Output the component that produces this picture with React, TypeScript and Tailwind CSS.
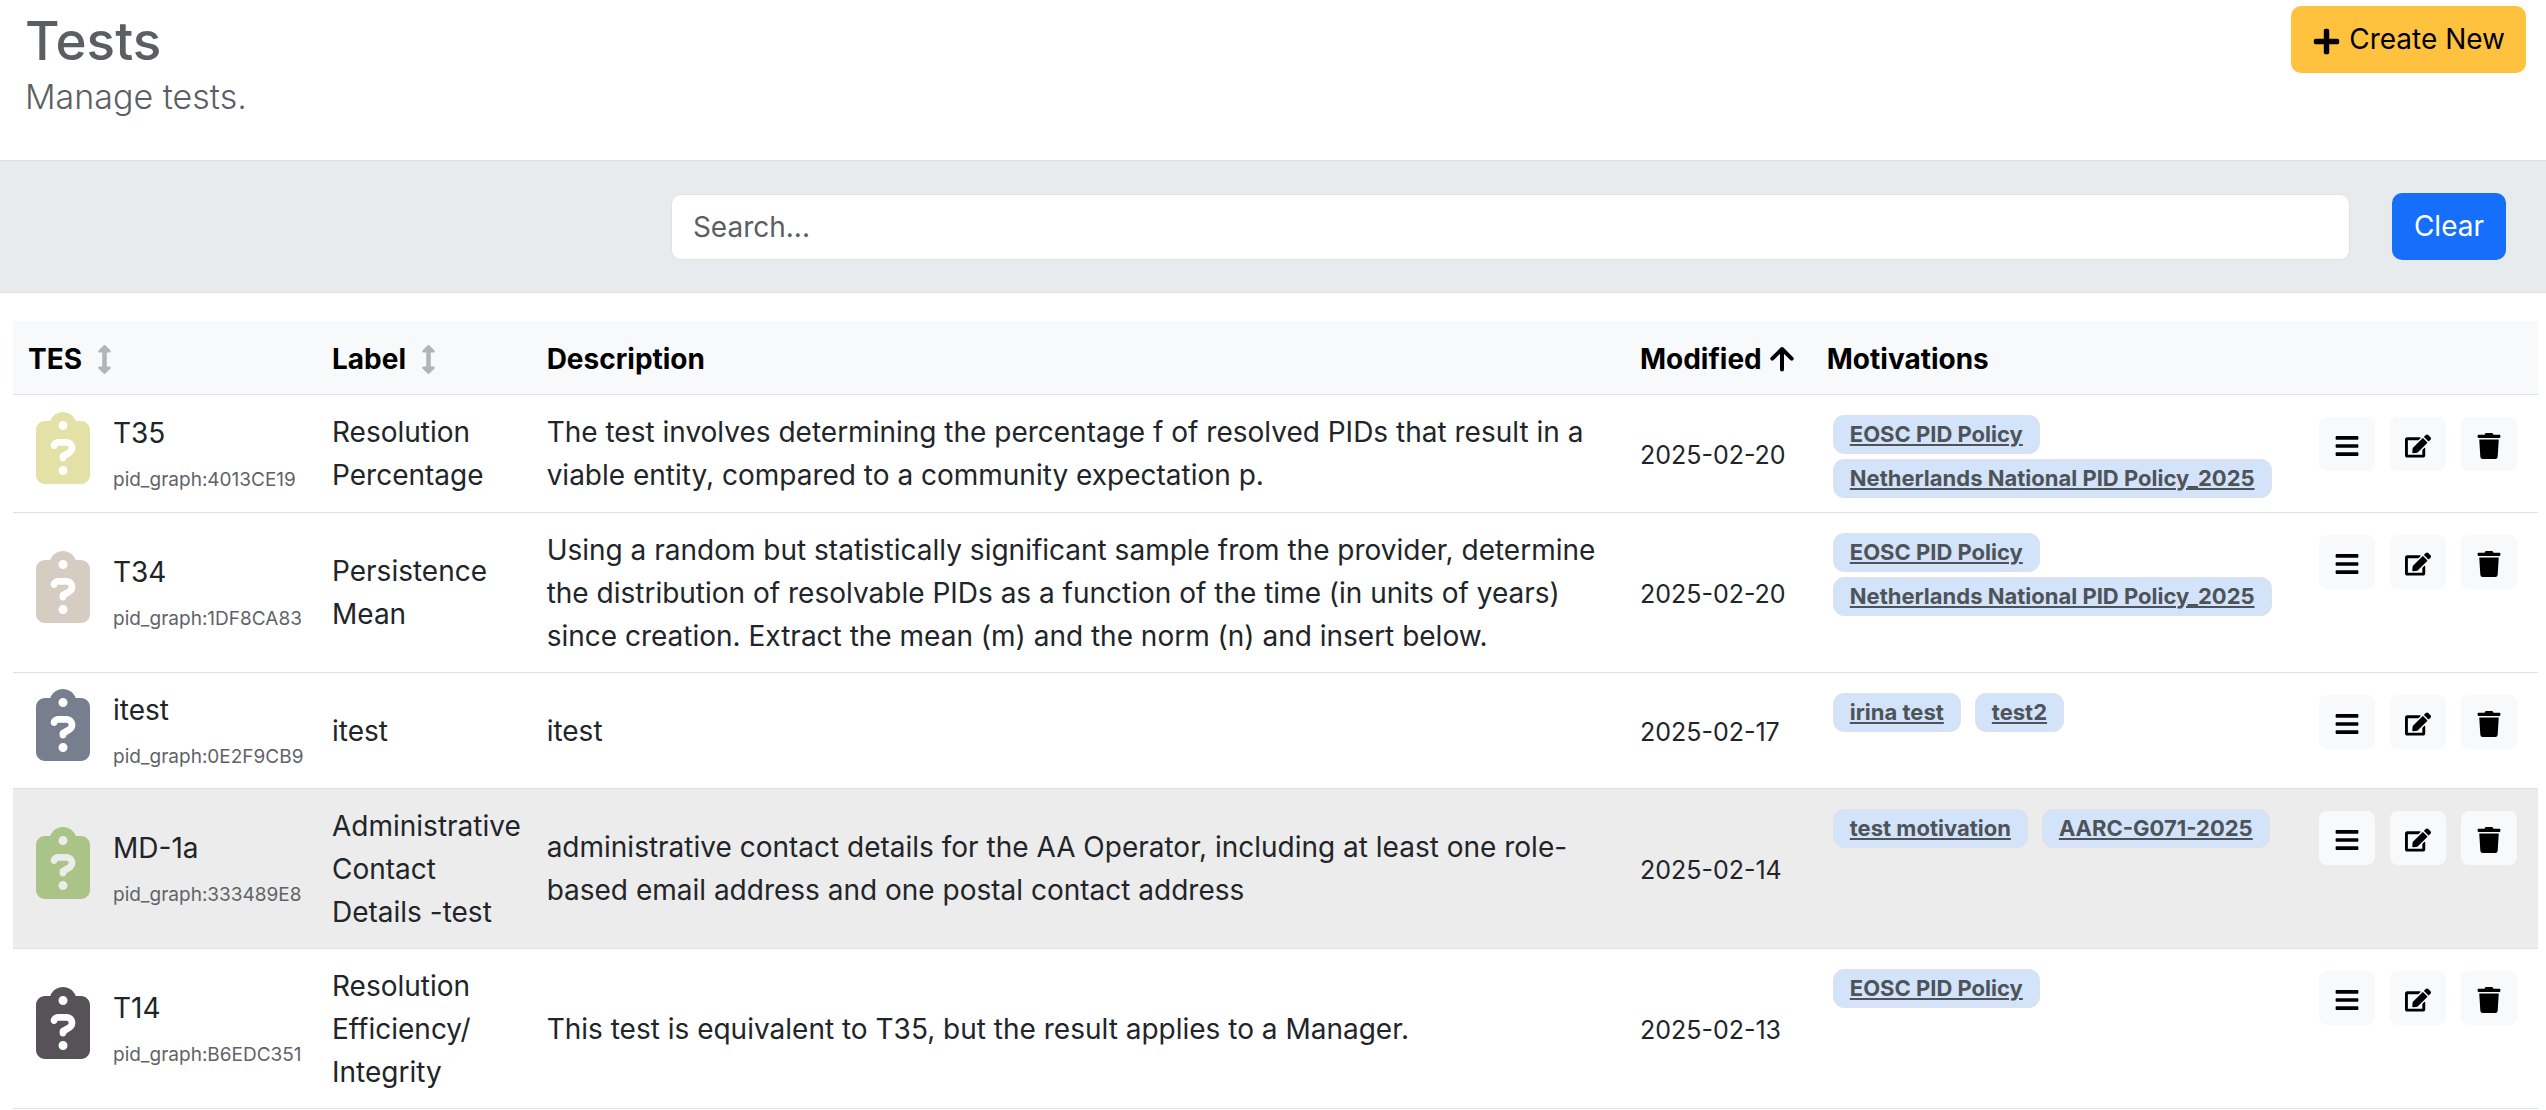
import { FaPlus, FaBars, FaEdit, FaTrash, FaArrowsAltV } from "react-icons/fa";
import { FaClipboardQuestion } from "react-icons/fa6";

type Test = {
  name: string;
  pid: string;
  label: string;
  description: string;
  modified: string;
  motivations: string[];
  color: string;
  active?: boolean;
};

const tests: Test[] = [
  {
    name: "T35",
    pid: "pid_graph:4013CE19",
    label: "Resolution Percentage",
    description:
      "The test involves determining the percentage f of resolved PIDs that result in a viable entity, compared to a community expectation p.",
    modified: "2025-02-20",
    motivations: ["EOSC PID Policy", "Netherlands National PID Policy_2025"],
    color: "text-[#e3e1a5]",
  },
  {
    name: "T34",
    pid: "pid_graph:1DF8CA83",
    label: "Persistence Mean",
    description:
      "Using a random but statistically significant sample from the provider, determine the distribution of resolvable PIDs as a function of the time (in units of years) since creation. Extract the mean (m) and the norm (n) and insert below.",
    modified: "2025-02-20",
    motivations: ["EOSC PID Policy", "Netherlands National PID Policy_2025"],
    color: "text-[#d6cdc2]",
  },
  {
    name: "itest",
    pid: "pid_graph:0E2F9CB9",
    label: "itest",
    description: "itest",
    modified: "2025-02-17",
    motivations: ["irina test", "test2"],
    color: "text-[#777f8f]",
  },
  {
    name: "MD-1a",
    pid: "pid_graph:333489E8",
    label: "Administrative Contact Details -test",
    description:
      "administrative contact details for the AA Operator, including at least one role-based email address and one postal contact address",
    modified: "2025-02-14",
    motivations: ["test motivation", "AARC-G071-2025"],
    color: "text-[#aac487]",
    active: true,
  },
  {
    name: "T14",
    pid: "pid_graph:B6EDC351",
    label: "Resolution Efficiency/ Integrity",
    description: "This test is equivalent to T35, but the result applies to a Manager.",
    modified: "2025-02-13",
    motivations: ["EOSC PID Policy"],
    color: "text-[#575158]",
  },
];

const actions = [
  { name: "Details", Icon: FaBars },
  { name: "Edit", Icon: FaEdit },
  { name: "Delete", Icon: FaTrash },
];

function SortedUpIcon() {
  return (
    <svg
      viewBox="0 0 24 26"
      className="h-[26px] w-6"
      fill="none"
      stroke="currentColor"
      strokeWidth="4"
      strokeLinecap="round"
      strokeLinejoin="round"
      aria-hidden="true"
    >
      <path d="M2.3 12.6 12 3l9.7 9.6M12 4v19.5" />
    </svg>
  );
}

function TestRow({ test }: { test: Test }) {
  return (
    <tr className={`border-b border-[#dee2e6] ${test.active ? "bg-[#ececec]" : ""}`}>
      <td className="pt-4 pr-3.5 pb-3.5 pl-[15px] align-middle">
        <div className="flex">
          <FaClipboardQuestion className={`ml-2 h-[72px] w-[54px] shrink-0 ${test.color}`} />
          <div className="ml-[23px]">
            <div>{test.name}</div>
            <div className="mt-2 text-[19px] leading-[34px] text-[#5f6367]">{test.pid}</div>
          </div>
        </div>
      </td>
      <td className="pt-4 pr-3 pb-3.5 pl-4 align-middle">{test.label}</td>
      <td className="pt-4 pr-3 pb-3.5 pl-4 align-middle">{test.description}</td>
      <td className="pt-[18px] pr-3 pb-3.5 pl-4 align-middle text-[25px]">{test.modified}</td>
      <td className="pt-5 pr-0 pb-3.5 pl-[22px] align-top">
        <div className="flex flex-wrap gap-x-3.5 gap-y-[5px]">
          {test.motivations.map((m) => (
            <a
              key={m}
              href="#"
              className="rounded-[11px] border border-[#dee2e6] bg-[#d3e3fa] px-4 text-[22px] leading-[37px] font-bold whitespace-nowrap text-[#4d5358] underline decoration-2 underline-offset-2"
            >
              {m}
            </a>
          ))}
        </div>
      </td>
      <td className="pt-[22px] pr-[21px] pb-3.5 align-top">
        <div className="flex justify-end gap-[15px]">
          {actions.map(({ name, Icon }) => (
            <button
              key={name}
              type="button"
              aria-label={`${name} ${test.name}`}
              className="flex h-[54px] w-14 items-center justify-center rounded-lg bg-[#f8f9fa] pt-1 text-black"
            >
              <Icon className="size-[26px]" />
            </button>
          ))}
        </div>
      </td>
    </tr>
  );
}

export default function App() {
  return (
    <div className="bg-white font-[Inter,sans-serif] text-[28px] leading-[43px] text-[#212529]">
      <header className="flex items-start justify-between px-[25px] pt-1.5 pb-[42px] text-[#5b5f63]">
        <div>
          <h1 className="text-[53px] leading-[70px] font-medium">Tests</h1>
          <p className="text-[34px] leading-[42px] font-light">Manage tests.</p>
        </div>
        <button
          type="button"
          className="-mr-[5px] flex h-[67px] items-center gap-2 rounded-[10px] bg-[#ffc23e] px-[21px] text-black"
        >
          <FaPlus className="mt-1 size-[29px]" />
          Create New
        </button>
      </header>

      <section className="flex items-center justify-end border-y border-[#dce0e4] bg-[#e7ebee] py-8 pr-10">
        <input
          type="text"
          aria-label="Search"
          placeholder="Search..."
          className="h-[66px] w-[67%] rounded-[10px] border border-[#dee2e6] bg-white px-[21px] placeholder:text-[#5b5f63]"
        />
        <button type="button" className="ml-[42px] h-[67px] rounded-[10px] bg-[#156ffb] px-[22px] text-white">
          Clear
        </button>
      </section>

      <main className="pt-7 pr-2 pl-[13px]">
        <table className="w-full table-fixed border-collapse">
          <colgroup>
            <col className="w-[12%]" />
            <col className="w-[8.5%]" />
            <col className="w-[43.3%]" />
            <col className="w-[7.4%]" />
            <col className="w-[19.4%]" />
            <col />
          </colgroup>
          <thead>
            <tr className="h-[73px] border-b border-[#dee2e6] bg-[#f8f9fb] text-left text-black">
              <th className="pt-1 pl-[15px] font-bold">
                <button type="button" className="flex items-center gap-2">
                  TES <FaArrowsAltV className="size-[29px] text-[#b0b5ba]" />
                </button>
              </th>
              <th className="pt-1 pl-4 font-bold">
                <button type="button" className="flex items-center gap-2">
                  Label <FaArrowsAltV className="size-[29px] text-[#b0b5ba]" />
                </button>
              </th>
              <th className="pt-1 pl-4 font-bold">Description</th>
              <th className="pt-1 pl-4 font-bold">
                <button type="button" className="flex items-center gap-2">
                  Modified <SortedUpIcon />
                </button>
              </th>
              <th className="pt-1 pl-4 font-bold">Motivations</th>
              <th aria-label="Actions" />
            </tr>
          </thead>
          <tbody>
            {tests.map((t) => (
              <TestRow key={t.name} test={t} />
            ))}
          </tbody>
        </table>
      </main>
    </div>
  );
}
